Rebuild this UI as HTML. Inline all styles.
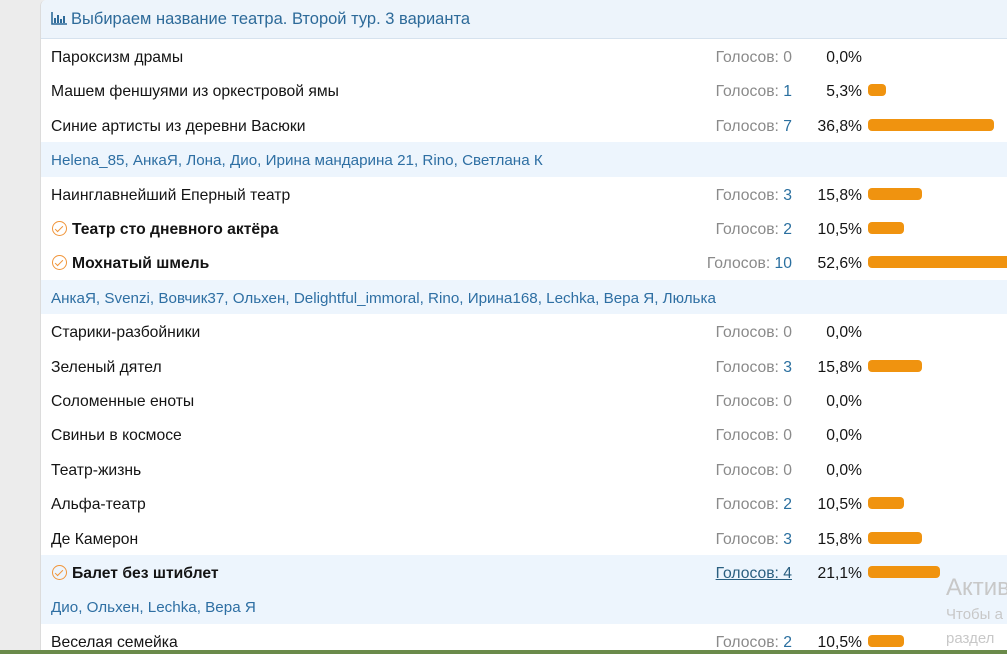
<!DOCTYPE html><html><head><meta charset="utf-8"><style>
body{margin:0;width:1007px;height:654px;overflow:hidden;background:#ececec;font-family:"Liberation Sans","DejaVu Sans",sans-serif;font-size:15.7px;color:#141414;position:relative}
.panel{position:absolute;left:40px;top:0;width:967px;height:650px;background:#fff;border-left:1px solid #dcdcdc;border-top-left-radius:6px;overflow:hidden}
.hd{position:absolute;left:0;top:0;right:0;height:38px;background:#edf4fb;border-bottom:1px solid #d6e2ee;color:#2d6a99;font-size:16.5px;line-height:38px;padding-left:10px}
.r{position:absolute;left:0;right:0;height:34.4px;line-height:34px}
.r>span{top:2px}
.r.b{background:#edf5fd}
.n{position:absolute;left:10px}
.n.bold{font-weight:bold;left:31px}
.who{position:absolute;left:10px;color:#2e6fa3;font-size:15.2px}
.ck{position:absolute;left:11px;top:10px;width:15px;height:15px;border:1.5px solid #f0953a;border-radius:50%;box-sizing:border-box}
.ck:after{content:"";position:absolute;left:4px;top:1.5px;width:3px;height:7px;border:solid #f0953a;border-width:0 1.5px 1.5px 0;transform:rotate(45deg)}
.v{position:absolute;right:216px;color:#8a8a8a;text-align:right}
.v span{color:#2a6f9f}
.v.u{text-decoration:underline;color:#2a5f80}
.p{position:absolute;right:146px;text-align:right}
.bar{position:absolute;left:827px;top:11px;height:12px;background:#f0930f;border-radius:4px}
.bot{position:absolute;left:0;top:650px;width:1007px;height:4px;background:#6a8a4a}
.wmc{position:absolute;left:946px;top:560px;width:61px;height:94px;overflow:hidden}
.wm{position:absolute;left:0;color:#c8c8c8;white-space:nowrap}
</style></head><body>
<div class="panel">
<div class="hd"><svg width="16" height="13" viewBox="0 0 16 13" style="vertical-align:-1px;margin-right:4px"><path d="M1 0v12h15" stroke="#2d6a99" stroke-width="1.6" fill="none"/><path d="M4 6v5M7 3v8M10 7v4M13 4v7" stroke="#2d6a99" stroke-width="2"/></svg>Выбираем название театра. Второй тур. 3 варианта</div>

<div class="r" style="top:39px"><span class="n">Пароксизм драмы</span><span class="v">Голосов: 0</span><span class="p">0,0%</span></div>
<div class="r" style="top:73.4px"><span class="n">Машем феншуями из оркестровой ямы</span><span class="v">Голосов: <span>1</span></span><span class="p">5,3%</span><div class="bar" style="width:18px"></div></div>
<div class="r" style="top:107.8px"><span class="n">Синие артисты из деревни Васюки</span><span class="v">Голосов: <span>7</span></span><span class="p">36,8%</span><div class="bar" style="width:126px"></div></div>
<div class="r b" style="top:142.2px"><span class="who">Helena_85, АнкаЯ, Лона, Дио, Ирина мандарина 21, Rino, Светлана К</span></div>
<div class="r" style="top:176.6px"><span class="n">Наинглавнейший Еперный театр</span><span class="v">Голосов: <span>3</span></span><span class="p">15,8%</span><div class="bar" style="width:54px"></div></div>
<div class="r" style="top:211px"><i class="ck"></i><span class="n bold">Театр сто дневного актёра</span><span class="v">Голосов: <span>2</span></span><span class="p">10,5%</span><div class="bar" style="width:36px"></div></div>
<div class="r" style="top:245.4px"><i class="ck"></i><span class="n bold">Мохнатый шмель</span><span class="v">Голосов: <span>10</span></span><span class="p">52,6%</span><div class="bar" style="width:180px"></div></div>
<div class="r b" style="top:279.8px"><span class="who">АнкаЯ, Svenzi, Вовчик37, Ольхен, Delightful_immoral, Rino, Ирина168, Lechka, Вера Я, Люлька</span></div>
<div class="r" style="top:314.2px"><span class="n">Старики-разбойники</span><span class="v">Голосов: 0</span><span class="p">0,0%</span></div>
<div class="r" style="top:348.6px"><span class="n">Зеленый дятел</span><span class="v">Голосов: <span>3</span></span><span class="p">15,8%</span><div class="bar" style="width:54px"></div></div>
<div class="r" style="top:383px"><span class="n">Соломенные еноты</span><span class="v">Голосов: 0</span><span class="p">0,0%</span></div>
<div class="r" style="top:417.4px"><span class="n">Свиньи в космосе</span><span class="v">Голосов: 0</span><span class="p">0,0%</span></div>
<div class="r" style="top:451.8px"><span class="n">Театр-жизнь</span><span class="v">Голосов: 0</span><span class="p">0,0%</span></div>
<div class="r" style="top:486.2px"><span class="n">Альфа-театр</span><span class="v">Голосов: <span>2</span></span><span class="p">10,5%</span><div class="bar" style="width:36px"></div></div>
<div class="r" style="top:520.6px"><span class="n">Де Камерон</span><span class="v">Голосов: <span>3</span></span><span class="p">15,8%</span><div class="bar" style="width:54px"></div></div>
<div class="r b" style="top:555px"><i class="ck"></i><span class="n bold">Балет без штиблет</span><span class="v u">Голосов: 4</span><span class="p">21,1%</span><div class="bar" style="width:72px"></div></div>
<div class="r b" style="top:589.4px"><span class="who">Дио, Ольхен, Lechka, Вера Я</span></div>
<div class="r" style="top:623.8px"><span class="n">Веселая семейка</span><span class="v">Голосов: <span>2</span></span><span class="p">10,5%</span><div class="bar" style="width:36px"></div></div>
</div>
<div class="wmc">
<div class="wm" style="top:14px;font-size:24px">Актив</div>
<div class="wm" style="top:46px;font-size:15px">Чтобы а</div>
<div class="wm" style="top:70px;font-size:15px">раздел</div>
</div>
<div class="bot"></div>
</body></html>
